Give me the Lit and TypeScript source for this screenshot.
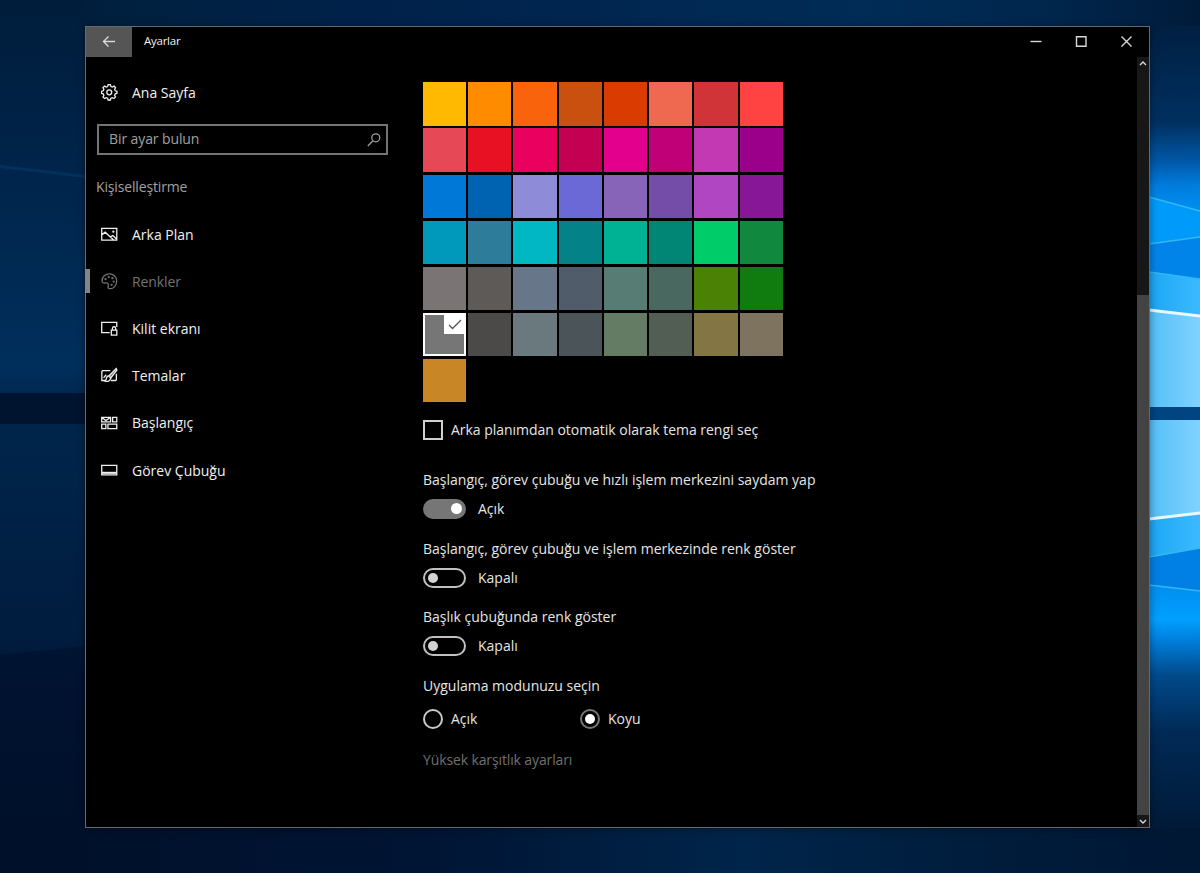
import { LitElement, html, css, svg } from 'lit';
import { customElement, property } from 'lit/decorators.js';

const SWATCHES = [
  '#ffb900', '#ff8c00', '#f9630c', '#ca5010', '#da3b01', '#ef6950', '#d13438', '#ff4343',
  '#e74856', '#e81123', '#ea005e', '#c30052', '#e3008c', '#bf0077', '#c239b3', '#9a0089',
  '#0078d7', '#0063b1', '#8e8cd8', '#6b69d6', '#8764b8', '#744da9', '#b146c2', '#881798',
  '#0099bc', '#2d7d9a', '#00b7c3', '#038387', '#00b294', '#018574', '#00cc6a', '#10893e',
  '#7a7574', '#5d5a58', '#68768a', '#515c6b', '#567c73', '#486860', '#498205', '#107c10',
  '#767676', '#4c4a48', '#69797e', '#4a5459', '#647c64', '#525e54', '#847545', '#7e735f',
  '#c98626',
];

const ICONS: Record<string, unknown> = {
  gear: svg`<path d="M6.900.7h2.200l.5 1.700 1.400.6 1.600-.9 1.500 1.500-.9 1.600.6 1.400 1.700.5v2l-1.700.5-.6 1.400.9 1.600-1.500 1.500-1.600-.9-1.400.6-.5 1.700H6.900l-.5-1.700-1.400-.6-1.600.9-1.500-1.500.9-1.600-.6-1.400L.5 9.100v-2l1.700-.5.6-1.400-.9-1.600 1.500-1.500 1.600.9 1.400-.6z"/><circle cx="8" cy="8.100" r="2.400"/>`,
  picture: svg`<path d="M.7 2.300h14.600v11.400H.7zM.7 8.600l3.300-2.600 8.300 7.500M9.200 10.500l2.300-1.300 3.800 3.600"/><circle cx="12" cy="5.500" r=".5"/>`,
  palette: svg`<path d="M1 7.600C1 3.600 4.200.8 8.200.8c4.100 0 7 3.100 7 7 0 4.400-3 7.400-6.200 7.400-2 0-2.500-1.300-2-2.900.6-1.900-.6-3.200-2.500-2.700C2.500 10.100 1 9.500 1 7.600z"/><g stroke-width="1"><circle cx="4.400" cy="6" r=".6"/><circle cx="7.500" cy="3.900" r=".6"/><circle cx="11" cy="5" r=".6"/><circle cx="12.300" cy="8.300" r=".6"/><circle cx="10.300" cy="11.500" r=".6"/></g>`,
  lock: svg`<path d="M8.500 12.300H.7v-10h14.600v4.500M4.500 12.300h4"/><path d="M10 9.800h5.300v4.800H10zM11.100 9.800V8.200c0-2.200 3.200-2.200 3.200 0v1.600"/>`,
  brush: svg`<path d="M9 3.600H1.500L.8 4.400v8.700h3.400M14.900 6.500v5.800l-.8.8H9.500"/><path d="M14.800 1.500 7.600 8.700l1.900 1.900 5.900-7.600z" fill="currentColor" fill-opacity=".45"/><path d="M7.600 8.700c-2 .2-2.400 1.800-2.500 3-.2 1-.8 1.400-1.500 1.700 2.600 1.300 5.500.2 5.900-2.800"/><path d="m2.500 10.500 2.500-3"/>`,
  tiles: svg`<path d="M.7 2.300h8.600v4.400H.7zM11.300 2.300h4v4.400h-4zM.7 8.900h4v4.400h-4zM6.700 8.900h8.600v4.400H6.700zM1.200 2.800l3.500 2.500 4-2.500"/>`,
  taskbar: svg`<path d="M.7 3.200h14.600v9.200H.7z"/><path d="M1 10.500h14" stroke-width="2"/>`,
  search: svg`<circle cx="9.800" cy="5.800" r="4"/><path d="M7 8.700 1.800 14"/>`,
};

@customElement('line-icon')
export class LineIcon extends LitElement {
  static styles = css`
    :host { display: block; width: 16.500px; height: 16.500px; flex: none; }
    svg { display: block; width: 100%; height: 100%; fill: none; stroke: currentColor; stroke-width: 1.25; }
  `;
  @property() name = '';
  render() {
    return html`<svg viewBox="0 0 16 16">${ICONS[this.name]}</svg>`;
  }
}

@customElement('desktop-wallpaper')
export class DesktopWallpaper extends LitElement {
  static styles = css`
    :host { display: block; width: 100%; height: 100%; }
    svg { display: block; }
  `;
  render() {
    return html`<svg width="1200" height="873" viewBox="0 0 1200 873">
      <defs>
        <linearGradient id="base" x1="0" x2="1" y1="0" y2="0">
          <stop offset="0" stop-color="#001b38"/><stop offset=".1" stop-color="#00203f"/><stop offset=".3" stop-color="#00214a"/>
          <stop offset=".72" stop-color="#002c56"/><stop offset=".88" stop-color="#00264c"/>
          <stop offset="1" stop-color="#001b3a"/>
        </linearGradient>
        <linearGradient id="low" x1="0" x2="1" y1="0" y2="0">
          <stop offset="0" stop-color="#001029"/><stop offset=".35" stop-color="#001433"/>
          <stop offset=".62" stop-color="#00254a"/><stop offset=".8" stop-color="#001d3d"/>
          <stop offset="1" stop-color="#001733"/>
        </linearGradient>
        <linearGradient id="left" x1="0" x2="0" y1="0" y2="1">
          <stop offset="0" stop-color="#001d3b"/><stop offset=".19" stop-color="#00244a"/>
          <stop offset=".42" stop-color="#002f5c"/><stop offset=".47" stop-color="#002248"/>
          <stop offset=".5" stop-color="#00254b"/><stop offset=".73" stop-color="#001c3e"/>
          <stop offset=".8" stop-color="#001534"/><stop offset="1" stop-color="#001029"/>
        </linearGradient>
        <linearGradient id="right" gradientUnits="userSpaceOnUse" x1="1144" y1="26" x2="1150" y2="828">
          <stop offset="0" stop-color="#001f42"/><stop offset=".12" stop-color="#003060"/>
          <stop offset=".165" stop-color="#0054a0"/><stop offset=".2" stop-color="#007ddf"/>
          <stop offset=".24" stop-color="#0095f5"/><stop offset=".7" stop-color="#0090f0"/>
          <stop offset=".74" stop-color="#00a0ff"/><stop offset=".765" stop-color="#0080dd"/>
          <stop offset=".81" stop-color="#004a8a"/><stop offset=".88" stop-color="#002a56"/>
          <stop offset="1" stop-color="#001a38"/>
        </linearGradient>
        <linearGradient id="pane" x1="0" x2="1" y1="0" y2="0">
          <stop offset="0" stop-color="#54bff8"/><stop offset="1" stop-color="#7fd2ff"/>
        </linearGradient>
        <linearGradient id="pane2" x1="0" x2="1" y1="0" y2="0">
          <stop offset="0" stop-color="#1ba6f2"/><stop offset="1" stop-color="#3cbaff"/>
        </linearGradient>
      </defs>
      <rect width="1200" height="440" fill="url(#base)"/>
      <rect y="440" width="1200" height="433" fill="url(#low)"/>
      <rect y="0" width="86" height="873" fill="url(#left)"/>
      <path d="M0 165 86 175V178L0 168z" fill="#003765" opacity=".7"/>
      <rect y="393" width="86" height="31" fill="#00142f"/>
      <path d="M0 655 86 646V873H0z" fill="#00102b" opacity=".55"/>
      <rect x="1149" y="26" width="51" height="802" fill="url(#right)"/>
      <path d="M1149 197 1200 211V237L1149 244z" fill="#009bfa"/>
      <path d="M1149 244 1200 237V279L1149 272z" fill="#0084ea"/>
      <path d="M1149 272 1200 279V316L1149 310z" fill="url(#pane2)"/>
      <path d="M1149 310 1200 316V407H1149z" fill="url(#pane)"/>
      <rect x="1149" y="407" width="51" height="13" fill="#004482"/>
      <path d="M1149 420H1200V513L1149 519z" fill="url(#pane)"/>
      <path d="M1149 519 1200 513V548L1149 557z" fill="url(#pane2)"/>
      <path d="M1149 557 1200 548V591L1149 585z" fill="#0080e4"/>
      <g fill="none" stroke="#32b8f4" stroke-width="1.600">
        <path d="M1149 197 1200 211M1149 244 1200 237M1149 272 1200 279M1149 557 1200 548M1149 585 1200 591"/>
      </g>
      <path d="M1149 310 1200 316M1149 519 1200 513" stroke="#e9f8ff" stroke-width="3"/>
    </svg>`;
  }
}

@customElement('toggle-setting')
export class ToggleSetting extends LitElement {
  static styles = css`
    :host { display: block; height: 68.7px; }
    .title { height: 20px; line-height: 20px; white-space: nowrap; }
    .row { display: flex; align-items: center; gap: 12px; margin-top: 9px; height: 20px; }
    .track { box-sizing: border-box; width: 43px; height: 20px; border: 2px solid #c0c0c0; border-radius: 10px; display: flex; align-items: center; padding: 0 3px; }
    .knob { width: 10px; height: 10px; border-radius: 50%; background: #d4d4d4; }
    .on { background: #767676; border-color: #767676; justify-content: flex-end; padding-right: 2px; }
    .on .knob { background: #fff; width: 11px; height: 11px; }
  `;
  @property() label = '';
  @property({ type: Boolean }) on = false;
  render() {
    return html`<div class="title">${this.label}</div>
      <div class="row">
        <div class="track ${this.on ? 'on' : ''}"><div class="knob"></div></div>
        <span>${this.on ? 'Açık' : 'Kapalı'}</span>
      </div>`;
  }
}

@customElement('app-root')
export class AppRoot extends LitElement {
  static styles = css`
    :host { display: block; position: relative; isolation: isolate; width: 1200px; height: 873px; overflow: hidden; box-sizing: border-box; padding: 26px 50px 45px 85px; font: 14px/20px "Open Sans", "Noto Sans", sans-serif; color: #e6e6e6; }
    .wallpaper { position: absolute; inset: 0; z-index: -1; }
    .window { box-sizing: border-box; width: 1065px; height: 802px; background: #000; border: 1px solid #636a70; box-shadow: 0 1px 8px rgba(0, 0, 0, .4); display: flex; flex-direction: column; }
    .titlebar { height: 30px; display: flex; align-items: center; flex: none; }
    .back { width: 46px; height: 30px; background: #555; display: grid; place-items: center; }
    .caption { margin: 0 0 2px 12px; font-size: 11.500px; letter-spacing: -0.25px; flex: 1; color: #f0f0f0; }
    .controls { display: flex; }
    .controls svg { width: 45px; height: 30px; display: block; }
    svg.glyph { fill: none; stroke: #d8d8d8; stroke-width: 1.400; display: block; }
    .body { flex: 1; display: flex; min-height: 0; }
    .sidebar { width: 337px; flex: none; }
    .item { position: relative; height: 47.200px; display: flex; align-items: center; padding-left: 15px; gap: 14.500px; white-space: nowrap; color: #f0f0f0; }
    .item line-icon { margin-top: -1px; }
    .home { height: 40px; margin-top: 16px; }
    .searchbox { box-sizing: border-box; width: 291px; height: 31px; margin: 11px 0 0 11px; border: 2px solid #747474; display: flex; align-items: center; justify-content: space-between; padding: 0 4px 0 10px; color: #a0a0a0; letter-spacing: -0.1px; }
    .searchbox span { margin-top: -1px; }
    .searchbox line-icon { width: 16px; height: 16px; }
    .section { margin: 22px 0 16px 10px; height: 20px; color: #a0a0a0; letter-spacing: -0.15px; }
    nav { margin-top: -2px; }
    .item.current { color: #727272; letter-spacing: -0.1px; }
    .current::before { content: ""; position: absolute; left: -1px; top: 11px; width: 5px; height: 24px; background: #858585; }
    .content { flex: 1; padding-top: 25.400px; }
    .swatches { display: grid; grid-template-columns: repeat(8, 43.240px); grid-auto-rows: 43.300px; gap: 2.800px 2px; }
    .swatch.chosen { position: relative; box-sizing: border-box; border: 2.500px solid #fff; }
    .tick { position: absolute; right: -1px; top: -1px; width: 21px; height: 20px; background: #fff; }
    .check { display: flex; align-items: center; gap: 8px; margin: 17.700px 0 30px; height: 20px; white-space: nowrap; letter-spacing: -0.03px; }
    .box { box-sizing: border-box; width: 20px; height: 20px; border: 2px solid #cfcfcf; }
    .mode { display: flex; margin-top: 13px; height: 20px; }
    .radio { display: flex; align-items: center; gap: 8px; width: 157px; }
    .ring { box-sizing: border-box; width: 20px; height: 20px; border: 2px solid #c8c8c8; border-radius: 50%; display: grid; place-items: center; }
    .ring.selected { border-color: #767676; }
    .dot { width: 10px; height: 10px; border-radius: 50%; background: #fff; }
    .link { margin-top: 21px; color: #707070; letter-spacing: -0.12px; }
    .scrollbar { width: 12px; background: #171717; display: flex; flex-direction: column; align-items: center; flex: none; }
    .scrollbar svg { width: 10px; height: 12px; flex: none; }
    .space { height: 226px; flex: none; }
    .thumb { flex: 1; width: 12px; background: #434343; }
  `;

  private nav = [
    ['picture', 'Arka Plan'],
    ['palette', 'Renkler'],
    ['lock', 'Kilit ekranı'],
    ['brush', 'Temalar'],
    ['tiles', 'Başlangıç'],
    ['taskbar', 'Görev Çubuğu'],
  ];

  render() {
    return html`
      <desktop-wallpaper class="wallpaper"></desktop-wallpaper>
      <div class="window">
        <header class="titlebar">
          <div class="back"><svg class="glyph" width="14" height="12" viewBox="0 0 14 12"><path d="M13 5.500H1.500M6.500.5l-5 5 5 5"/></svg></div>
          <span class="caption">Ayarlar</span>
          <div class="controls">
            <svg class="glyph" viewBox="0 0 45 30"><path d="M16.500 14.500h11"/></svg>
            <svg class="glyph" viewBox="0 0 45 30"><path d="M17.500 9.800h9.500v9.400h-9.500z"/></svg>
            <svg class="glyph" viewBox="0 0 45 30"><path d="m17.500 9.500 10 10m0-10-10 10"/></svg>
          </div>
        </header>
        <div class="body">
          <aside class="sidebar">
            <div class="item home"><line-icon name="gear"></line-icon><span>Ana Sayfa</span></div>
            <div class="searchbox"><span>Bir ayar bulun</span><line-icon name="search"></line-icon></div>
            <div class="section">Kişiselleştirme</div>
            <nav>
              ${this.nav.map(([icon, text], i) => html`<div class="item ${i === 1 ? 'current' : ''}">
                <line-icon name=${icon}></line-icon><span>${text}</span></div>`)}
            </nav>
          </aside>
          <main class="content">
            <div class="swatches">
              ${SWATCHES.map((c, i) => html`<div class="swatch ${i === 40 ? 'chosen' : ''}" style="background-color:${c}">
                ${i === 40 ? html`<svg class="tick" viewBox="0 0 21 20"><path d="m5 11 3.500 3.500L17 6" fill="none" stroke="#555" stroke-width="1.300"/></svg>` : ''}
              </div>`)}
            </div>
            <div class="check"><div class="box"></div><span>Arka planımdan otomatik olarak tema rengi seç</span></div>
            <toggle-setting on label="Başlangıç, görev çubuğu ve hızlı işlem merkezini saydam yap"></toggle-setting>
            <toggle-setting label="Başlangıç, görev çubuğu ve işlem merkezinde renk göster"></toggle-setting>
            <toggle-setting label="Başlık çubuğunda renk göster"></toggle-setting>
            <div>Uygulama modunuzu seçin</div>
            <div class="mode">
              <div class="radio"><div class="ring"></div><span>Açık</span></div>
              <div class="radio"><div class="ring selected"><div class="dot"></div></div><span>Koyu</span></div>
            </div>
            <div class="link">Yüksek karşıtlık ayarları</div>
          </main>
          <div class="scrollbar">
            <svg class="glyph" viewBox="0 0 10 12"><path d="m2 8 3-3 3 3"/></svg>
            <div class="space"></div>
            <div class="thumb"></div>
            <svg class="glyph" viewBox="0 0 10 12"><path d="m2 5 3 3 3-3"/></svg>
          </div>
        </div>
      </div>`;
  }
}
